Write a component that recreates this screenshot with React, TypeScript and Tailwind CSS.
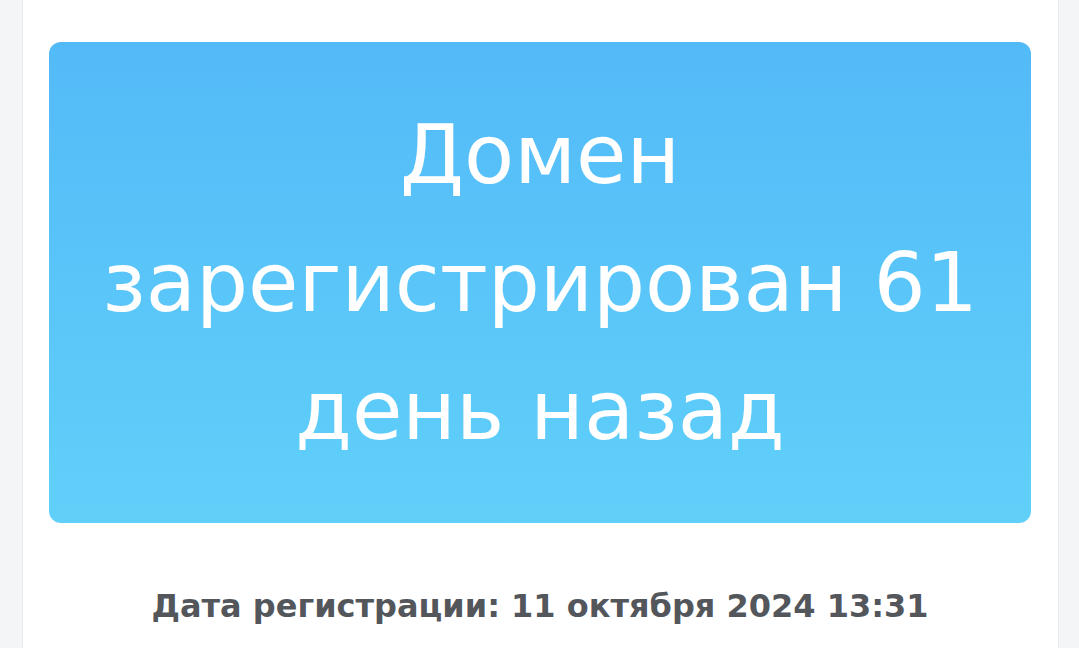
const dejavu = "font-['DejaVu_Sans',sans-serif]";

export default function App() {
  return (
    <div className={`flex min-h-[648px] bg-[#f4f5f7] ${dejavu}`}>
      <div className="w-[23px] shrink-0 border-r border-[#e7e8eb]" />

      <main className="flex-1 bg-white pl-[26px] pr-[27px] pt-[42px]">
        {/* Age banner */}
        <div className="flex h-[481px] flex-col items-center justify-center rounded-xl bg-gradient-to-b from-[#53baf8] to-[#60d0f9] text-center text-[82px] font-normal leading-[128px] text-white">
          <span className="whitespace-nowrap">Домен</span>
          <span className="whitespace-nowrap">зарегистрирован 61</span>
          <span className="whitespace-nowrap">день назад</span>
        </div>

        <p className="mt-[59px] text-center text-[32px] font-bold leading-[48px] text-[#53575c]">
          Дата регистрации: 11 октября 2024 13:31
        </p>
      </main>

      <div className="w-[21px] shrink-0 border-l border-[#e7e8eb]" />
    </div>
  );
}
